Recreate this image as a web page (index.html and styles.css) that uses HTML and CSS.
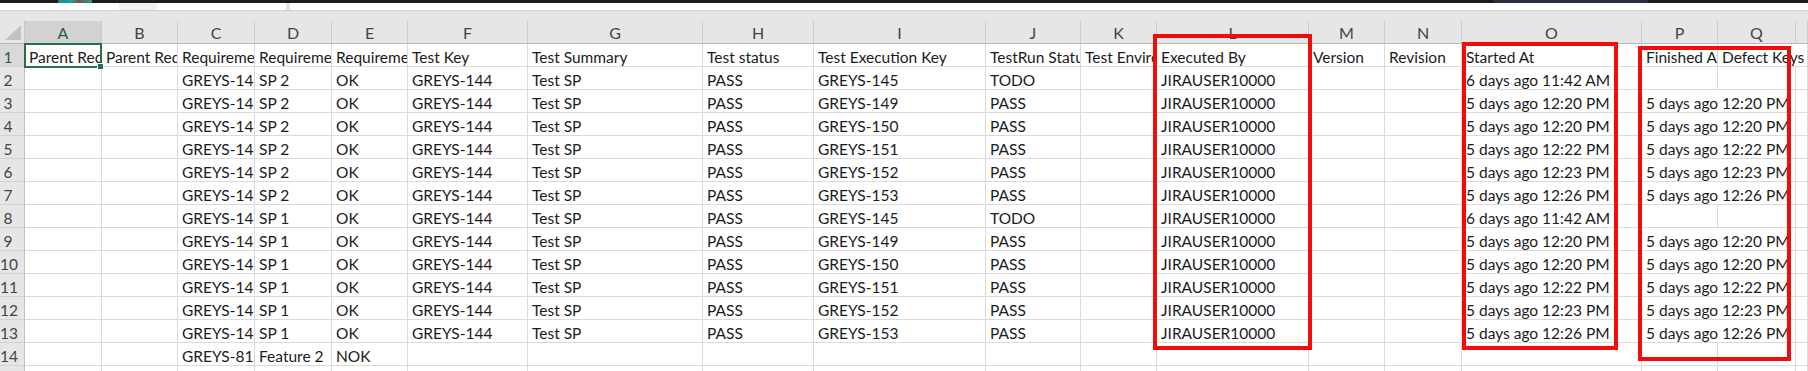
FILE: index.html
```html
<!DOCTYPE html>
<html>
<head>
<meta charset="utf-8">
<link rel="stylesheet" href="styles.css">
</head>
<body>
<div class="chrome">
  <div class="topbar"><span class="avatar"></span><span class="navy"></span></div>
  <div class="tabs"><span class="tab t1"></span><span class="tabgap"></span><span class="tab t2"></span><span class="tabsep"></span><span class="tab t3"></span></div>
</div>
<div class="sheet">
  <div class="row hdr">
    <div class="corner"><svg width="16" height="15" viewBox="0 0 16 15"><polygon points="16,0 16,15 0,15" fill="#c2c2c2"/></svg></div>
    <div class="ch sel">A</div><div class="ch">B</div><div class="ch">C</div><div class="ch">D</div><div class="ch">E</div><div class="ch">F</div><div class="ch">G</div><div class="ch">H</div><div class="ch">I</div><div class="ch">J</div><div class="ch">K</div><div class="ch">L</div><div class="ch">M</div><div class="ch">N</div><div class="ch">O</div><div class="ch">P</div><div class="ch">Q</div><div class="ch"></div>
  </div>
  <div class="row">
    <div class="rh selrow">1</div>
    <div class="c">Parent Requirement Key</div><div class="c">Parent Requirement Summary</div><div class="c">Requirement Key</div><div class="c">Requirement Summary</div><div class="c">Requirement Status</div><div class="c">Test Key</div><div class="c">Test Summary</div><div class="c">Test status</div><div class="c">Test Execution Key</div><div class="c">TestRun Status</div><div class="c">Test Environments</div><div class="c">Executed By</div><div class="c">Version</div><div class="c">Revision</div><div class="c">Started At</div><div class="c">Finished At</div><div class="c span2">Defect Keys</div>
  </div>
  <div class="row">
    <div class="rh">2</div>
    <div class="c"></div><div class="c"></div><div class="c">GREYS-143</div><div class="c">SP 2</div><div class="c">OK</div><div class="c">GREYS-144</div><div class="c">Test SP</div><div class="c">PASS</div><div class="c">GREYS-145</div><div class="c">TODO</div><div class="c"></div><div class="c">JIRAUSER10000</div><div class="c"></div><div class="c"></div><div class="c">6 days ago 11:42 AM</div><div class="c"></div><div class="c"></div><div class="c"></div>
  </div>
  <div class="row">
    <div class="rh">3</div>
    <div class="c"></div><div class="c"></div><div class="c">GREYS-143</div><div class="c">SP 2</div><div class="c">OK</div><div class="c">GREYS-144</div><div class="c">Test SP</div><div class="c">PASS</div><div class="c">GREYS-149</div><div class="c">PASS</div><div class="c"></div><div class="c">JIRAUSER10000</div><div class="c"></div><div class="c"></div><div class="c">5 days ago 12:20 PM</div><div class="c span2">5 days ago 12:20 PM</div><div class="c"></div>
  </div>
  <div class="row">
    <div class="rh">4</div>
    <div class="c"></div><div class="c"></div><div class="c">GREYS-143</div><div class="c">SP 2</div><div class="c">OK</div><div class="c">GREYS-144</div><div class="c">Test SP</div><div class="c">PASS</div><div class="c">GREYS-150</div><div class="c">PASS</div><div class="c"></div><div class="c">JIRAUSER10000</div><div class="c"></div><div class="c"></div><div class="c">5 days ago 12:20 PM</div><div class="c span2">5 days ago 12:20 PM</div><div class="c"></div>
  </div>
  <div class="row">
    <div class="rh">5</div>
    <div class="c"></div><div class="c"></div><div class="c">GREYS-143</div><div class="c">SP 2</div><div class="c">OK</div><div class="c">GREYS-144</div><div class="c">Test SP</div><div class="c">PASS</div><div class="c">GREYS-151</div><div class="c">PASS</div><div class="c"></div><div class="c">JIRAUSER10000</div><div class="c"></div><div class="c"></div><div class="c">5 days ago 12:22 PM</div><div class="c span2">5 days ago 12:22 PM</div><div class="c"></div>
  </div>
  <div class="row">
    <div class="rh">6</div>
    <div class="c"></div><div class="c"></div><div class="c">GREYS-143</div><div class="c">SP 2</div><div class="c">OK</div><div class="c">GREYS-144</div><div class="c">Test SP</div><div class="c">PASS</div><div class="c">GREYS-152</div><div class="c">PASS</div><div class="c"></div><div class="c">JIRAUSER10000</div><div class="c"></div><div class="c"></div><div class="c">5 days ago 12:23 PM</div><div class="c span2">5 days ago 12:23 PM</div><div class="c"></div>
  </div>
  <div class="row">
    <div class="rh">7</div>
    <div class="c"></div><div class="c"></div><div class="c">GREYS-143</div><div class="c">SP 2</div><div class="c">OK</div><div class="c">GREYS-144</div><div class="c">Test SP</div><div class="c">PASS</div><div class="c">GREYS-153</div><div class="c">PASS</div><div class="c"></div><div class="c">JIRAUSER10000</div><div class="c"></div><div class="c"></div><div class="c">5 days ago 12:26 PM</div><div class="c span2">5 days ago 12:26 PM</div><div class="c"></div>
  </div>
  <div class="row">
    <div class="rh">8</div>
    <div class="c"></div><div class="c"></div><div class="c">GREYS-142</div><div class="c">SP 1</div><div class="c">OK</div><div class="c">GREYS-144</div><div class="c">Test SP</div><div class="c">PASS</div><div class="c">GREYS-145</div><div class="c">TODO</div><div class="c"></div><div class="c">JIRAUSER10000</div><div class="c"></div><div class="c"></div><div class="c">6 days ago 11:42 AM</div><div class="c"></div><div class="c"></div><div class="c"></div>
  </div>
  <div class="row">
    <div class="rh">9</div>
    <div class="c"></div><div class="c"></div><div class="c">GREYS-142</div><div class="c">SP 1</div><div class="c">OK</div><div class="c">GREYS-144</div><div class="c">Test SP</div><div class="c">PASS</div><div class="c">GREYS-149</div><div class="c">PASS</div><div class="c"></div><div class="c">JIRAUSER10000</div><div class="c"></div><div class="c"></div><div class="c">5 days ago 12:20 PM</div><div class="c span2">5 days ago 12:20 PM</div><div class="c"></div>
  </div>
  <div class="row">
    <div class="rh">10</div>
    <div class="c"></div><div class="c"></div><div class="c">GREYS-142</div><div class="c">SP 1</div><div class="c">OK</div><div class="c">GREYS-144</div><div class="c">Test SP</div><div class="c">PASS</div><div class="c">GREYS-150</div><div class="c">PASS</div><div class="c"></div><div class="c">JIRAUSER10000</div><div class="c"></div><div class="c"></div><div class="c">5 days ago 12:20 PM</div><div class="c span2">5 days ago 12:20 PM</div><div class="c"></div>
  </div>
  <div class="row">
    <div class="rh">11</div>
    <div class="c"></div><div class="c"></div><div class="c">GREYS-142</div><div class="c">SP 1</div><div class="c">OK</div><div class="c">GREYS-144</div><div class="c">Test SP</div><div class="c">PASS</div><div class="c">GREYS-151</div><div class="c">PASS</div><div class="c"></div><div class="c">JIRAUSER10000</div><div class="c"></div><div class="c"></div><div class="c">5 days ago 12:22 PM</div><div class="c span2">5 days ago 12:22 PM</div><div class="c"></div>
  </div>
  <div class="row">
    <div class="rh">12</div>
    <div class="c"></div><div class="c"></div><div class="c">GREYS-142</div><div class="c">SP 1</div><div class="c">OK</div><div class="c">GREYS-144</div><div class="c">Test SP</div><div class="c">PASS</div><div class="c">GREYS-152</div><div class="c">PASS</div><div class="c"></div><div class="c">JIRAUSER10000</div><div class="c"></div><div class="c"></div><div class="c">5 days ago 12:23 PM</div><div class="c span2">5 days ago 12:23 PM</div><div class="c"></div>
  </div>
  <div class="row">
    <div class="rh">13</div>
    <div class="c"></div><div class="c"></div><div class="c">GREYS-142</div><div class="c">SP 1</div><div class="c">OK</div><div class="c">GREYS-144</div><div class="c">Test SP</div><div class="c">PASS</div><div class="c">GREYS-153</div><div class="c">PASS</div><div class="c"></div><div class="c">JIRAUSER10000</div><div class="c"></div><div class="c"></div><div class="c">5 days ago 12:26 PM</div><div class="c span2">5 days ago 12:26 PM</div><div class="c"></div>
  </div>
  <div class="row">
    <div class="rh">14</div>
    <div class="c"></div><div class="c"></div><div class="c">GREYS-81</div><div class="c">Feature 2</div><div class="c">NOK</div><div class="c"></div><div class="c"></div><div class="c"></div><div class="c"></div><div class="c"></div><div class="c"></div><div class="c"></div><div class="c"></div><div class="c"></div><div class="c"></div><div class="c"></div><div class="c"></div><div class="c"></div>
  </div>
  <div class="row">
    <div class="rh">15</div>
    <div class="c"></div><div class="c"></div><div class="c"></div><div class="c"></div><div class="c"></div><div class="c"></div><div class="c"></div><div class="c"></div><div class="c"></div><div class="c"></div><div class="c"></div><div class="c"></div><div class="c"></div><div class="c"></div><div class="c"></div><div class="c"></div><div class="c"></div><div class="c"></div>
  </div>
</div>
<div class="selbox"><span class="handle"></span></div>
<div class="mark m1"></div>
<div class="mark m2"></div>
<div class="mark m3"></div>
</body>
</html>
```

FILE: styles.css
```css
html, body {
  margin: 0;
  padding: 0;
}
body {
  width: 1808px;
  height: 371px;
  overflow: hidden;
  background: #ffffff;
  position: relative;
  font-family: Lato, "Liberation Sans", sans-serif;
  color: #1b1b1b;
}

/* top window chrome strip */
.chrome {
  height: 21px;
  background: #e6e6e6;
}
.topbar {
  height: 3px;
  background: #1c1c1c;
  display: flex;
}
.avatar {
  margin-left: 58px;
  width: 34px;
  height: 3px;
  background: linear-gradient(90deg, #138c8c 0%, #1aa3a0 40%, #7a4f45 60%, #18a09c 100%);
}
.navy {
  margin-left: 1402px;
  width: 154px;
  height: 3px;
  background: #2c2d40;
}
.tabs {
  height: 7px;
  background: #ffffff;
  border-bottom: 1px solid #cfcfcf;
  display: flex;
}
.tab {
  height: 7px;
  background: #ffffff;
}
.t1 { width: 119px; }
.tabgap { width: 38px; background: #f1f1f1; }
.t2 { width: 129px; }
.tabsep { width: 4px; background: #e2e2e2; }
.t3 { flex: 1; }

/* sheet grid */
.row {
  display: grid;
  grid-template-columns: 25px 77px 76px 77px 77px 76px 120px 175px 111px 172px 95px 76px 152px 76px 77px 180px 76px 78px 12px;
  height: 23px;
}
.c, .rh, .ch, .corner {
  box-sizing: border-box;
  height: 23px;
  border-right: 1px solid #dadada;
  border-bottom: 1px solid #dadada;
  white-space: nowrap;
  overflow: hidden;
}
.c {
  font-size: 15.5px;
  line-height: 18px;
  padding: 4px 0 0 4px;
}
.span2 {
  grid-column: span 2;
}

.hdr {
  background: #e6e6e6;
}
.corner {
  background: #e6e6e6;
  border-right: 1px solid #c6c6c6;
  border-bottom: 1px solid #b9b9b9;
  display: flex;
  align-items: flex-end;
  justify-content: flex-end;
  padding: 0 3px 3px 0;
}
.corner svg {
  display: block;
}
.ch {
  background: #e6e6e6;
  border-right: 1px solid #cbcbcb;
  border-bottom: 1px solid #b9b9b9;
  text-align: center;
  font-size: 16px;
  line-height: 18px;
  padding-top: 3px;
  color: #444444;
}
.ch.sel {
  background: #d2d2d2;
  color: #2b5c43;
}
.rh {
  background: #e6e6e6;
  border-right: 1px solid #c2c2c2;
  border-bottom: 1px solid #d2d2d2;
  text-align: center;
  padding: 4px 8px 0 0;
  font-size: 15.5px;
  line-height: 18px;
  color: #444444;
}
.rh.selrow {
  background: #d9d9d9;
  color: #2b5c43;
}

/* overlays */
.selbox {
  position: absolute;
  left: 24px;
  top: 43px;
  width: 78px;
  height: 25px;
  box-sizing: border-box;
  border: 2px solid #217346;
}
.handle {
  position: absolute;
  right: -4px;
  bottom: -4px;
  width: 5px;
  height: 5px;
  background: #217346;
  border: 1px solid #ffffff;
}
.mark {
  position: absolute;
  box-sizing: border-box;
  border: 4px solid #f50a0a;
}
.m1 {
  left: 1153px;
  top: 34px;
  width: 159px;
  height: 316px;
}
.m2 {
  left: 1462px;
  top: 42px;
  width: 156px;
  height: 308px;
}
.m3 {
  left: 1638px;
  top: 46px;
  width: 153px;
  height: 315px;
}
```
